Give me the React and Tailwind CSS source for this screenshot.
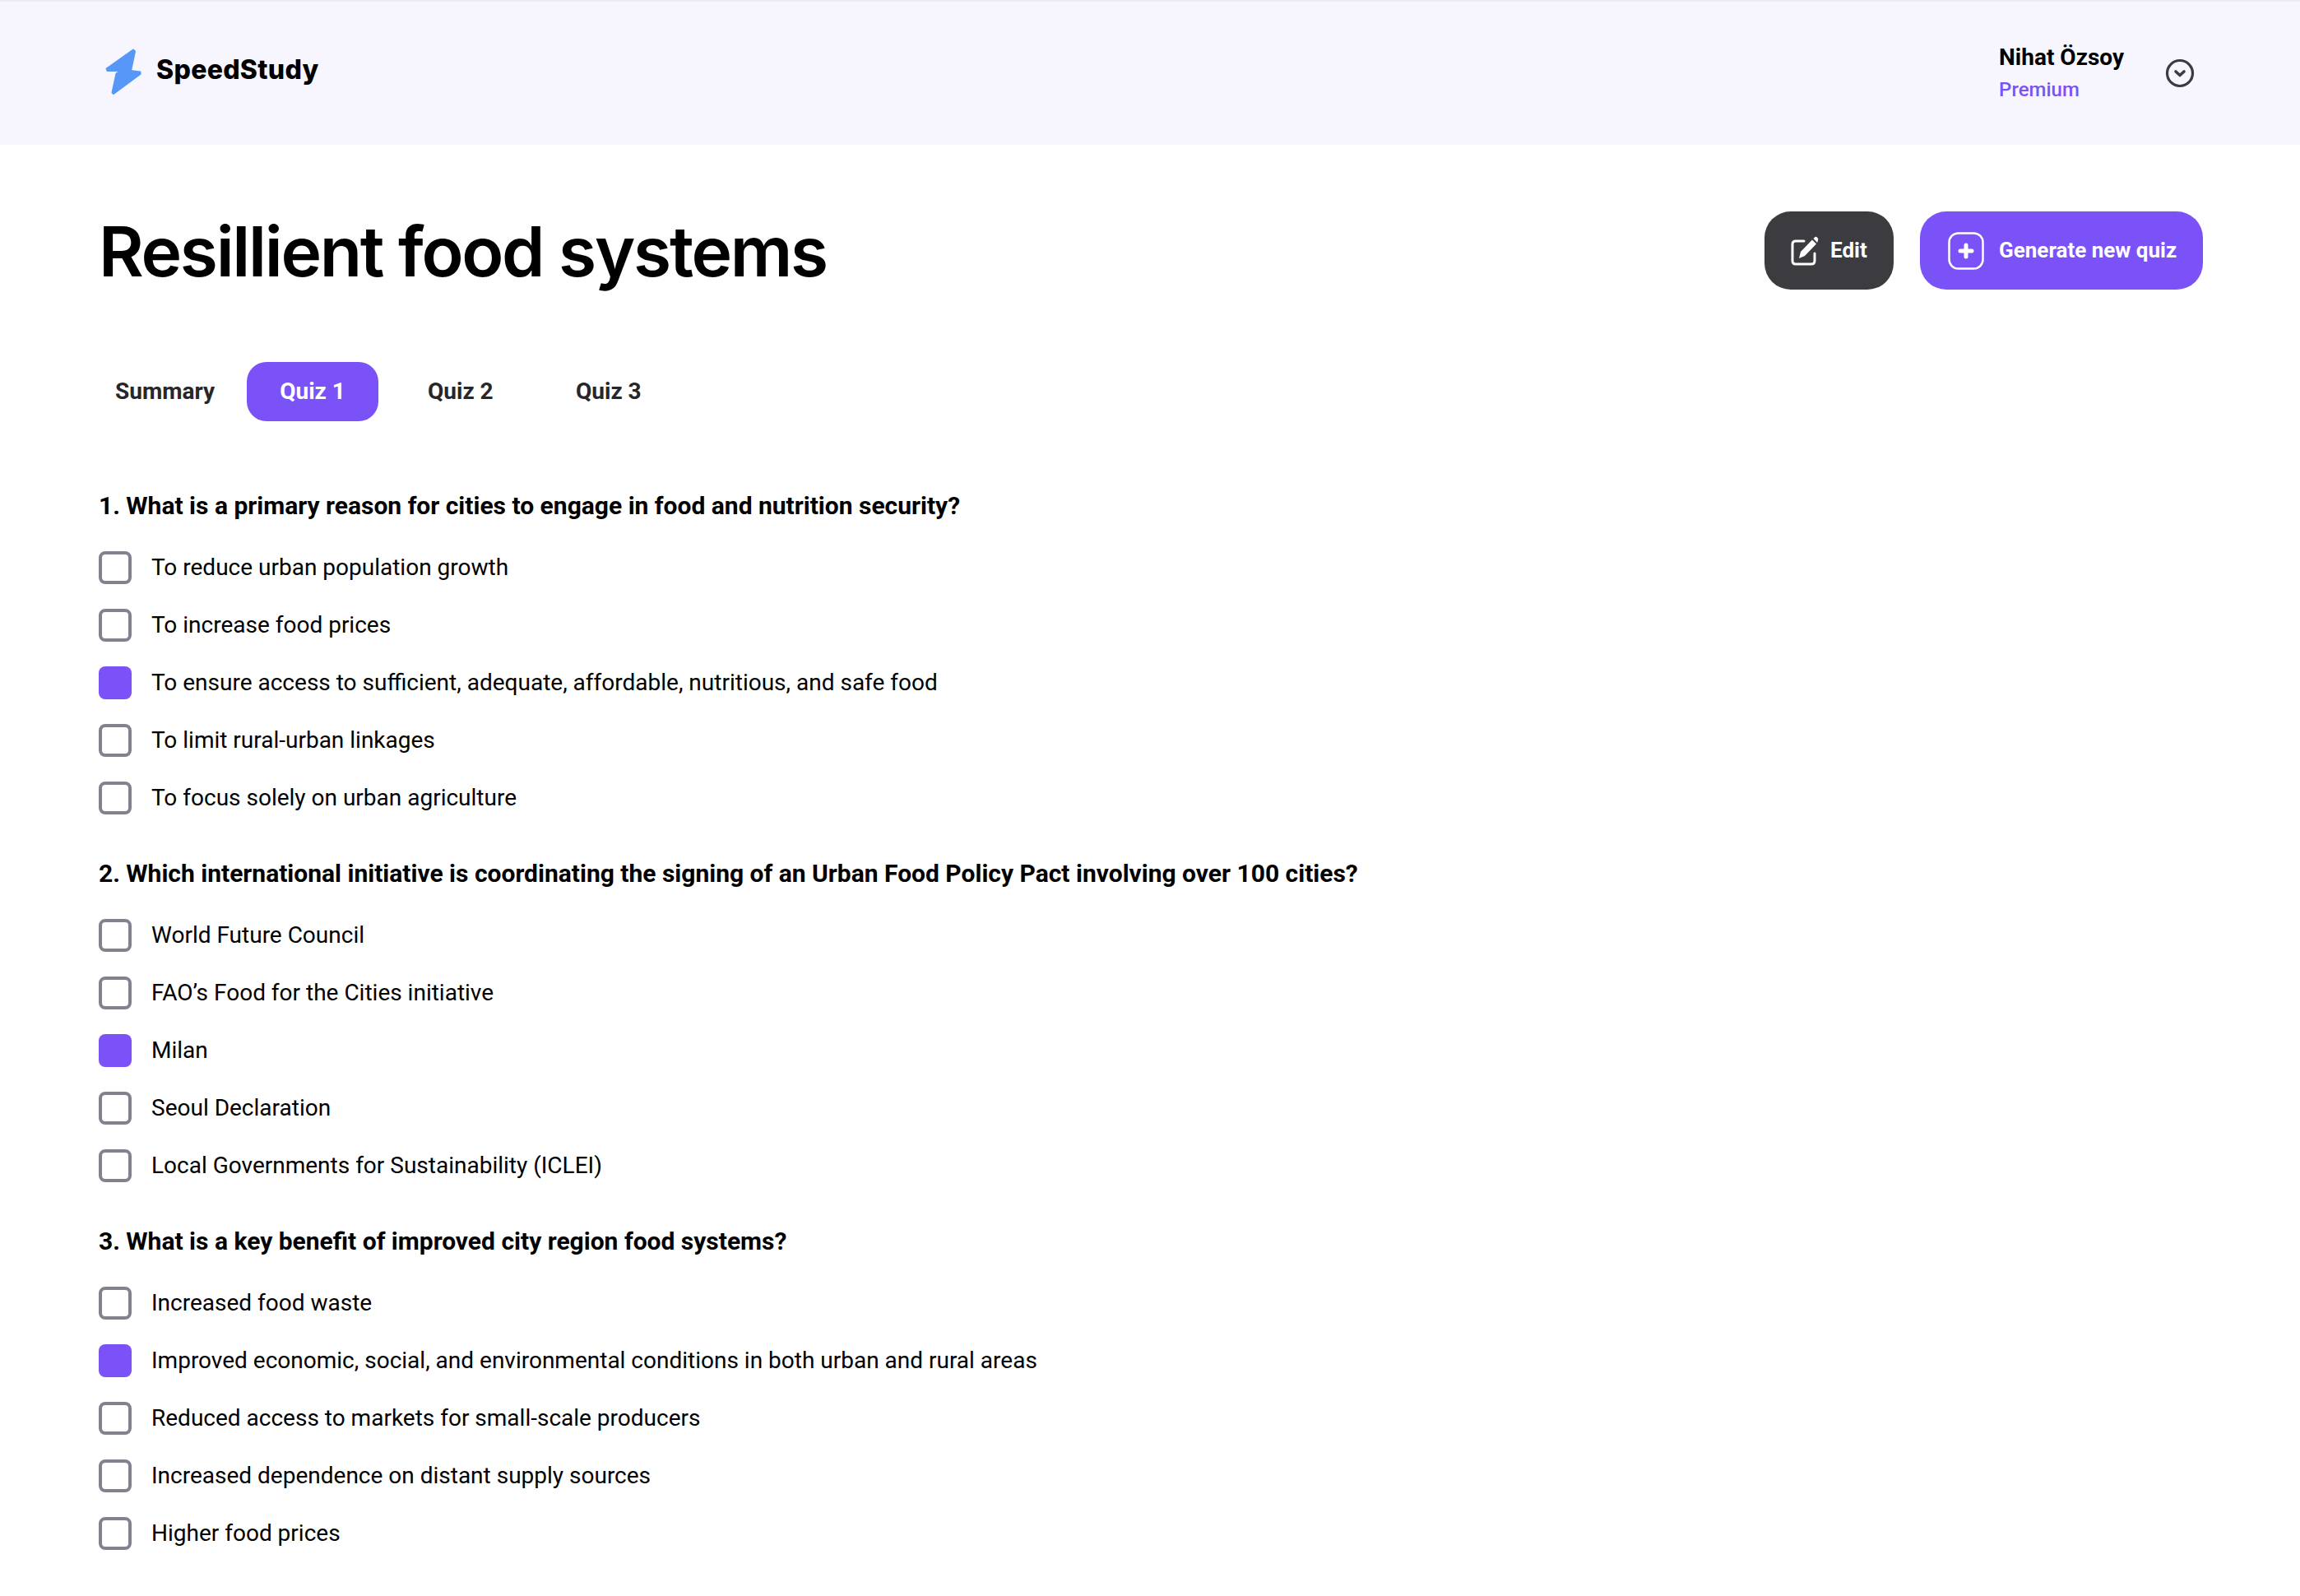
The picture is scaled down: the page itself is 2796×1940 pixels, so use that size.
const quiz = [
  {
    question: "1. What is a primary reason for cities to engage in food and nutrition security?",
    options: [
      "To reduce urban population growth",
      "To increase food prices",
      "To ensure access to sufficient, adequate, affordable, nutritious, and safe food",
      "To limit rural-urban linkages",
      "To focus solely on urban agriculture",
    ],
    answer: 2,
  },
  {
    question: "2. Which international initiative is coordinating the signing of an Urban Food Policy Pact involving over 100 cities?",
    options: [
      "World Future Council",
      "FAO’s Food for the Cities initiative",
      "Milan",
      "Seoul Declaration",
      "Local Governments for Sustainability (ICLEI)",
    ],
    answer: 2,
  },
  {
    question: "3. What is a key benefit of improved city region food systems?",
    options: [
      "Increased food waste",
      "Improved economic, social, and environmental conditions in both urban and rural areas",
      "Reduced access to markets for small-scale producers",
      "Increased dependence on distant supply sources",
      "Higher food prices",
    ],
    answer: 1,
  },
];

function Logo() {
  return (
    <svg width="44" height="56" viewBox="0 0 44 56" fill="#5797f7" stroke="#5797f7" strokeWidth="2" strokeLinejoin="round">
      <path d="M34 1.5 L1.5 24.5 L2.5 27 L20 27 L13.5 30.5 L8.5 53.5 L10 55 L42.5 31 L42.5 28.5 L31 27 L36 3.5 Z" />
    </svg>
  );
}

function ChevronCircle() {
  return (
    <svg width="36" height="36" viewBox="0 0 36 36" fill="none" stroke="#3b3b40" strokeWidth="3.2" strokeLinecap="round" strokeLinejoin="round">
      <circle cx="18" cy="18" r="15.5" />
      <path d="M13 16 L18 20.5 L23 16" strokeWidth="3.6" />
    </svg>
  );
}

function EditIcon() {
  return (
    <svg width="34" height="36" viewBox="0 0 34 36" fill="none">
      <path d="M16 6 H6 Q2 6 2 10 V30 Q2 34 6 34 H25 Q29 34 29 30 V21" stroke="white" strokeWidth="3" strokeLinecap="round" />
      <path d="M10 27 L12 19 L26 4.5 L31 9.5 L17 24 Z" fill="white" />
      <path d="M27.5 3 L29.5 1 Q30.5 0.3 31.5 1 L33 2.8 Q33.7 4 33 5 L32.2 8 Z" fill="white" />
    </svg>
  );
}

function PlusBox() {
  return (
    <svg width="44" height="46" viewBox="0 0 44 46" fill="none" stroke="white" strokeLinecap="round">
      <rect x="1.5" y="1.5" width="41" height="43" rx="11" strokeWidth="2.5" />
      <path d="M22 16 V30 M15 23 H29" strokeWidth="5" />
    </svg>
  );
}

function Question({ item }) {
  return (
    <div className="mb-[52px]">
      <h2 className="h-10 mb-[35px] text-[30px] leading-10 font-bold text-black">{item.question}</h2>
      <div className="flex flex-col gap-[30px]">
        {item.options.map((option, i) => (
          <div key={option} className="flex items-center h-10 gap-6">
            {i === item.answer ? (
              <div className="w-10 h-10 rounded-lg bg-[#7b52f7]"></div>
            ) : (
              <div className="w-10 h-10 rounded-lg border-4 border-[#82828f] bg-white"></div>
            )}
            <span className="text-[28px] leading-10 text-black">{option}</span>
          </div>
        ))}
      </div>
    </div>
  );
}

export default function App() {
  return (
    <div className="min-h-[1940px] bg-white font-['Roboto',sans-serif]">
      <header className="flex items-center justify-between h-[176px] pl-[128px] pr-[128px] bg-[#f7f6fe] border-t-2 border-[#ebebf0]">
        <div className="flex items-center gap-[18px] pb-[4px]">
          <Logo />
          <span className="mb-[5px] text-[32px] font-extrabold text-black font-['Inter',sans-serif] tracking-[0.3px]">SpeedStudy</span>
        </div>
        <div className="flex items-center gap-[50px]">
          <div className="flex flex-col gap-[7px] pb-1">
            <span className="text-[28px] leading-9 font-bold text-black">Nihat Özsoy</span>
            <span className="text-[24px] leading-7 font-medium text-[#7b52f7]">Premium</span>
          </div>
          <ChevronCircle />
        </div>
      </header>

      <main className="pl-[120px] pr-[118px] pt-[81px]">
        <div className="flex items-center justify-between h-[95px]">
          <h1 className="pt-[2px] text-[84px] font-semibold text-black font-['Inter',sans-serif] tracking-[-2.3px]">Resillient food systems</h1>
          <div className="flex gap-8">
            <button className="flex items-center gap-[14px] pl-[32px] w-[157px] h-[95px] rounded-[32px] bg-[#3b3b40] text-white text-[26px] font-bold">
              <EditIcon />
              Edit
            </button>
            <button className="flex items-center gap-[18px] pl-[34px] w-[344px] h-[95px] rounded-[32px] bg-[#7b52f7] text-white text-[26px] font-bold">
              <PlusBox />
              Generate new quiz
            </button>
          </div>
        </div>

        <div className="flex items-center mt-[88px] mb-[83px] h-[72px] text-[28px] font-bold text-[#27272b]">
          <span className="ml-5 w-[160px]">Summary</span>
          <span className="flex items-center justify-center w-[160px] h-[72px] rounded-3xl bg-[#7b52f7] text-white">Quiz 1</span>
          <span className="ml-[60px] w-[180px]">Quiz 2</span>
          <span>Quiz 3</span>
        </div>

        {quiz.map((item) => (
          <Question key={item.question} item={item} />
        ))}
      </main>
    </div>
  );
}
